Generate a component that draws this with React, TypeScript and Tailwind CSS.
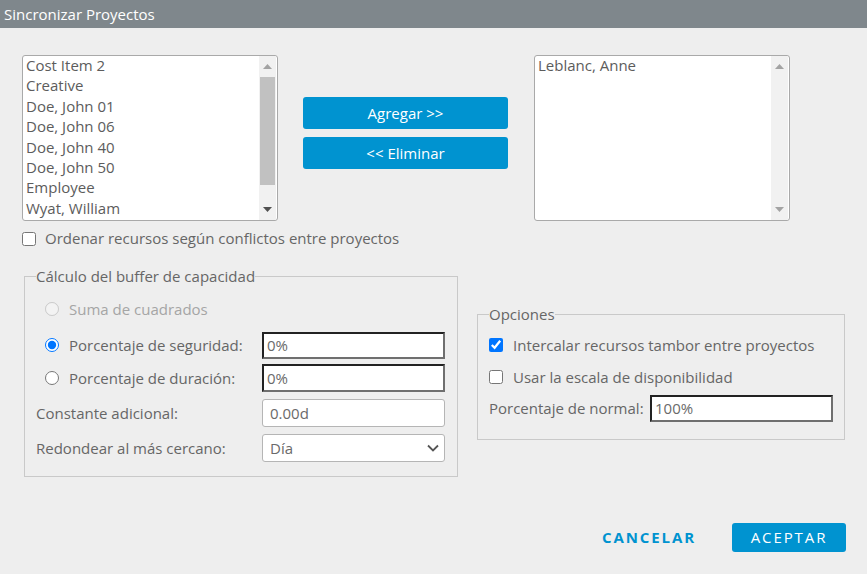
import React from "react";

const font = { fontFamily: "'Open Sans', 'Noto Sans', sans-serif" };

function ListBox({ items, thumb }: { items: string[]; thumb: boolean }) {
  return (
    <div className="flex w-[256px] h-[166px] bg-white border border-[#a9a9a9] rounded-[3px] overflow-hidden">
      <div className="flex-1 pl-[3px] -mt-[1px]">
        {items.map((t) => (
          <div key={t} className="h-[20.4px] leading-[20.4px] text-[15px] text-[#5c5c5c] whitespace-nowrap">
            {t}
          </div>
        ))}
      </div>
      <div className="w-[17px] mr-[1px] bg-[#f1f1f1] flex flex-col items-center">
        <div className="h-[21px] flex items-center justify-center">
          <svg width="9" height="5" viewBox="0 0 9 5">
            <path d="M0 5 L4.5 0 L9 5 Z" fill="#a3a3a3" />
          </svg>
        </div>
        <div className="flex-1 w-full px-[1px]">
          {thumb && <div className="h-[108px] bg-[#c1c1c1]" />}
        </div>
        <div className="h-[21px] flex items-center justify-center">
          <svg width="9" height="5" viewBox="0 0 9 5">
            <path d="M0 0 L9 0 L4.5 5 Z" fill={thumb ? "#505050" : "#a3a3a3"} />
          </svg>
        </div>
      </div>
    </div>
  );
}

function DarkInput({ value, w = "w-[183px]", h = "h-[27px]" }: { value: string; w?: string; h?: string }) {
  return (
    <div
      className={`${w} ${h} bg-white border-2 border-t-[#222] border-l-[#222] border-r-[#6f6f6f] border-b-[#6f6f6f] flex items-center pl-[3px] text-[15px] text-[#6a6a6a]`}
    >
      {value}
    </div>
  );
}

export default function App() {
  const left = [
    "Cost Item 2",
    "Creative",
    "Doe, John 01",
    "Doe, John 06",
    "Doe, John 40",
    "Doe, John 50",
    "Employee",
    "Wyat, William",
  ];
  return (
    <div className="w-[867px] h-[574px] bg-[#eeeeee] flex flex-col" style={font}>
      <div className="h-[28px] bg-[#7f878c] flex items-center pl-[4px] text-white text-[15px]">
        Sincronizar Proyectos
      </div>

      <div className="flex mt-[27px] pl-[22px]">
        <ListBox items={left} thumb />
        <div className="ml-[25px] mt-[42px] flex flex-col gap-[8px]">
          <button className="w-[205px] h-[32px] bg-[#0093d0] rounded-[3px] text-white text-[15px] font-medium">
            Agregar &gt;&gt;
          </button>
          <button className="w-[205px] h-[32px] bg-[#0093d0] rounded-[3px] text-white text-[15px] font-medium">
            &lt;&lt; Eliminar
          </button>
        </div>
        <div className="ml-[26px]">
          <ListBox items={["Leblanc, Anne"]} thumb={false} />
        </div>
      </div>

      <label className="flex items-center mt-[9px] pl-[22px] h-[17px] text-[15px] text-[#666]">
        <input type="checkbox" className="w-[14px] h-[14px] m-0" />
        <span className="ml-[9px]">Ordenar recursos según conflictos entre proyectos</span>
      </label>

      <div className="flex items-start mt-[19px] pl-[24px]">
        <fieldset className="w-[434px] h-[211px] border border-[#c9c9c9] pl-[11px] pr-[11px]">
          <legend className="text-[15px] text-[#666] leading-[20px]">Cálculo del buffer de capacidad</legend>
          <div className="flex items-center h-[24px] mt-[11px] pl-[9px] text-[15px] text-[#a5a5a5]">
            <input type="radio" disabled className="w-[14px] h-[14px] m-0" />
            <span className="ml-[10px]">Suma de cuadrados</span>
          </div>
          <div className="flex items-center h-[28px] mt-[10px] text-[15px] text-[#666]">
            <div className="flex items-center w-[226px] pl-[9px]">
              <input type="radio" defaultChecked className="w-[14px] h-[14px] m-0" name="p" />
              <span className="ml-[10px]">Porcentaje de seguridad:</span>
            </div>
            <DarkInput value="0%" />
          </div>
          <div className="flex items-center h-[28px] mt-[5px] text-[15px] text-[#666]">
            <div className="flex items-center w-[226px] pl-[9px]">
              <input type="radio" className="w-[14px] h-[14px] m-0" name="p" />
              <span className="ml-[10px]">Porcentaje de duración:</span>
            </div>
            <DarkInput value="0%" h="h-[28px]" />
          </div>
          <div className="flex items-center h-[28px] mt-[7px] text-[15px] text-[#666]">
            <div className="w-[226px]">Constante adicional:</div>
            <div className="w-[183px] h-[28px] bg-white border border-[#b5b5b5] rounded-[3px] flex items-center pl-[7px] text-[#6a6a6a]">
              0.00d
            </div>
          </div>
          <div className="flex items-center h-[28px] mt-[7px] text-[15px] text-[#666]">
            <div className="w-[226px]">Redondear al más cercano:</div>
            <div className="w-[183px] h-[28px] bg-white border border-[#b5b5b5] rounded-[3px] flex items-center justify-between pl-[7px] pr-[5px] text-[#6a6a6a]">
              <span>Día</span>
              <svg width="12" height="8" viewBox="0 0 12 8">
                <path d="M1 1.5 L6 6.5 L11 1.5" fill="none" stroke="#555" strokeWidth="1.8" />
              </svg>
            </div>
          </div>
        </fieldset>

        <fieldset className="ml-[19px] mt-[38px] w-[368px] h-[136px] border border-[#c9c9c9] pl-[11px] pr-[11px]">
          <legend className="text-[15px] text-[#666] leading-[20px]">Opciones</legend>
          <label className="flex items-center h-[22px] mt-[10px] text-[15px] text-[#666]">
            <input type="checkbox" defaultChecked className="w-[14px] h-[14px] m-0" />
            <span className="ml-[10px]">Intercalar recursos tambor entre proyectos</span>
          </label>
          <label className="flex items-center h-[22px] mt-[10px] text-[15px] text-[#666]">
            <input type="checkbox" className="w-[14px] h-[14px] m-0" />
            <span className="ml-[10px]">Usar la escala de disponibilidad</span>
          </label>
          <div className="flex items-center h-[28px] mt-[6px] text-[15px] text-[#666]">
            <span className="w-[161px]">Porcentaje de normal:</span>
            <DarkInput value="100%" w="w-[183px]" />
          </div>
        </fieldset>
      </div>

      <div className="flex justify-end items-center mt-auto mb-[22px] pr-[21px]">
        <button className="text-[#0093d0] font-bold text-[15px] tracking-[1.9px] mr-[36px]">CANCELAR</button>
        <button className="w-[114px] h-[29px] bg-[#0093d0] rounded-[3px] text-white text-[15px] font-medium tracking-[1.9px]">
          ACEPTAR
        </button>
      </div>
    </div>
  );
}
